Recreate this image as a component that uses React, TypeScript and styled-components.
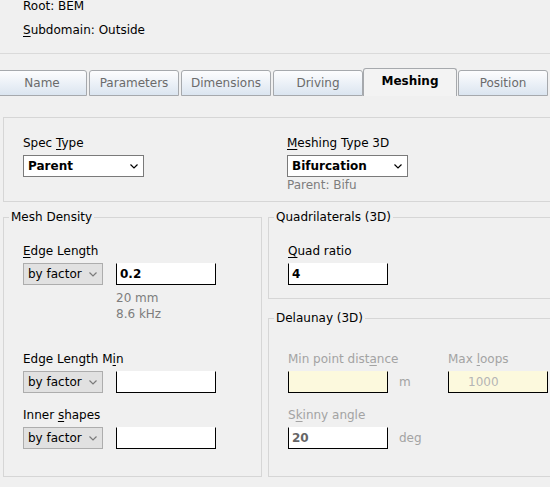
import React from "react";
import styled, { createGlobalStyle } from "styled-components";

const GlobalStyle = createGlobalStyle`
  html, body {
    margin: 0;
    background: #f0f0f0;
  }
  body {
    font-family: "DejaVu Sans", Verdana, sans-serif;
    font-size: 12px;
    color: #000;
    overflow: hidden;
  }
`;

const Chevron = ({ color }: { color: string }) => (
  <svg width="8" height="5" viewBox="0 0 8 5">
    <polyline points="0.5,0.5 4,4 7.5,0.5" fill="none" stroke={color} strokeWidth="1.2" />
  </svg>
);

export default function App() {
  return (
    <Page>
      <GlobalStyle />
      <Header>
        <InfoRow>Root: BEM</InfoRow>
        <InfoRow>
          <Mn>S</Mn>ubdomain: Outside
        </InfoRow>
      </Header>

      <TabStrip>
        <Tab>Name</Tab>
        <Tab>Parameters</Tab>
        <Tab>Dimensions</Tab>
        <Tab>Driving</Tab>
        <Tab $active>Meshing</Tab>
        <Tab>Position</Tab>
        <Tab />
      </TabStrip>

      <SpecBox>
        <Field>
          <Label>
            Spec <Mn>T</Mn>ype
          </Label>
          <Controls>
            <Select $width={121}>
              Parent
              <Chevron color="#000" />
            </Select>
          </Controls>
        </Field>
        <Field>
          <Label>
            <Mn>M</Mn>eshing Type 3D
          </Label>
          <Controls>
            <Select $width={121}>
              Bifurcation
              <Chevron color="#000" />
            </Select>
          </Controls>
          <Hint>Parent: Bifu</Hint>
        </Field>
      </SpecBox>

      <Bottom>
        <Group>
          <Legend>Mesh Density</Legend>
          <GroupBody $top={16}>
            <Field>
              <Label>
                <Mn>E</Mn>dge Length
              </Label>
              <Controls>
                <Select $width={80} $flat>
                  by factor
                  <Chevron color="#7a7a7a" />
                </Select>
                <TextBox>0.2</TextBox>
              </Controls>
              <Notes>
                <div>20 mm</div>
                <div>8.6 kHz</div>
              </Notes>
            </Field>
            <Field>
              <Label>
                Edge Length M<Mn>i</Mn>n
              </Label>
              <Controls>
                <Select $width={80} $flat>
                  by factor
                  <Chevron color="#7a7a7a" />
                </Select>
                <TextBox />
              </Controls>
            </Field>
            <Field>
              <Label>
                Inner <Mn>s</Mn>hapes
              </Label>
              <Controls>
                <Select $width={80} $flat>
                  by factor
                  <Chevron color="#7a7a7a" />
                </Select>
                <TextBox />
              </Controls>
            </Field>
          </GroupBody>
        </Group>

        <RightColumn>
          <Group $bottom={13}>
            <Legend>Quadrilaterals (3D)</Legend>
            <GroupBody $top={16}>
              <Field>
                <Label>
                  <Mn>Q</Mn>uad ratio
                </Label>
                <Controls>
                  <TextBox>4</TextBox>
                </Controls>
              </Field>
            </GroupBody>
          </Group>

          <Group $grow>
            <Legend>Delaunay (3D)</Legend>
            <GroupBody $top={23}>
              <PairRow>
                <Field>
                  <Label $disabled>
                    Min point dist<Mn>a</Mn>nce
                  </Label>
                  <Controls>
                    <TextBox $tone="locked" />
                    <Unit>m</Unit>
                  </Controls>
                </Field>
                <Field>
                  <Label $disabled>
                    Max <Mn>l</Mn>oops
                  </Label>
                  <Controls>
                    <TextBox $tone="locked" $light>
                      1000
                    </TextBox>
                  </Controls>
                </Field>
              </PairRow>
              <Field>
                <Label $disabled>
                  S<Mn>k</Mn>inny angle
                </Label>
                <Controls>
                  <TextBox $tone="dim">20</TextBox>
                  <Unit>deg</Unit>
                </Controls>
              </Field>
            </GroupBody>
          </Group>
        </RightColumn>
      </Bottom>
    </Page>
  );
}

const Page = styled.div`
  width: 558px;
  height: 487px;
  overflow: hidden;
`;

const Header = styled.div`
  margin-top: -6px;
  padding: 0 0 11px 23px;
  border-bottom: 1px solid #dadada;
`;

const InfoRow = styled.div`
  height: 24px;
  line-height: 24px;
`;

const Mn = styled.u`
  text-decoration: underline;
  text-underline-offset: 2px;
`;

const TabStrip = styled.div`
  display: flex;
  align-items: flex-end;
  height: 28px;
  margin: 14px 0 0 -3px;
`;

const Tab = styled.div<{ $active?: boolean }>`
  flex: none;
  box-sizing: border-box;
  width: ${(p) => (p.$active ? 94 : 90)}px;
  height: ${(p) => (p.$active ? 28 : 26)}px;
  margin-left: ${(p) => (p.$active ? -2 : 0)}px;
  margin-right: ${(p) => (p.$active ? 1 : 2)}px;
  border: 1px solid #a6a9ad;
  border-bottom: ${(p) => (p.$active ? "none" : "1px solid #a6a9ad")};
  border-radius: 3px 3px 0 0;
  background: ${(p) => (p.$active ? "#f3f3f3" : "linear-gradient(#fdfdfe, #dbe5f0)")};
  color: ${(p) => (p.$active ? "#000" : "#6b6b6b")};
  font-weight: ${(p) => (p.$active ? "bold" : "normal")};
  display: flex;
  align-items: center;
  justify-content: center;
  padding-bottom: ${(p) => (p.$active ? 3 : 0)}px;
`;

const SpecBox = styled.div`
  margin: 21px 0 0 3px;
  padding: 16px 0 8px 19px;
  border: 1px solid #d6d6d6;
  display: grid;
  grid-template-columns: 264px 1fr;
`;

const Field = styled.div`
  display: flex;
  flex-direction: column;
  align-items: flex-start;
`;

const Label = styled.div<{ $disabled?: boolean }>`
  padding-top: 1px;
  line-height: 16px;
  color: ${(p) => (p.$disabled ? "#a3a3a3" : "#000")};
`;

const Controls = styled.div`
  margin-top: 4px;
  display: flex;
  align-items: center;
  gap: 13px;
`;

const Select = styled.div<{ $width: number; $flat?: boolean }>`
  box-sizing: border-box;
  width: ${(p) => p.$width}px;
  height: 22px;
  padding: 0 5px 0 4px;
  display: flex;
  align-items: center;
  justify-content: space-between;
  border: 1px solid ${(p) => (p.$flat ? "#adadad" : "#7a7a7a")};
  background: ${(p) => (p.$flat ? "#e1e1e1" : "#fff")};
  font-weight: ${(p) => (p.$flat ? "normal" : "bold")};
`;

const Hint = styled.div`
  line-height: 16px;
  color: #7d7d7d;
`;

const TextBox = styled.div<{ $tone?: "normal" | "locked" | "dim"; $light?: boolean }>`
  box-sizing: border-box;
  width: 100px;
  height: 22px;
  line-height: 20px;
  padding-left: ${(p) => (p.$light ? 19 : 3)}px;
  border: 1px solid #000;
  border-top-color: transparent;
  background: ${(p) => (p.$tone === "locked" ? "#fcf9dd" : "#fff")};
  font-weight: ${(p) => (p.$light ? "normal" : "bold")};
  color: ${(p) => (p.$light ? "#b5b5b5" : p.$tone === "dim" ? "#666" : "#000")};
`;

const Notes = styled.div`
  margin: 5px 0 15px 93px;
  line-height: 16px;
  color: #7d7d7d;
`;

const Unit = styled.span`
  color: #a3a3a3;
  margin-left: -2px;
`;

const Bottom = styled.div`
  margin: 7px 0 0 3px;
  display: grid;
  grid-template-columns: 259px 1fr;
  column-gap: 6px;
`;

const RightColumn = styled.div`
  display: flex;
  flex-direction: column;
  gap: 11px;
`;

const Group = styled.fieldset<{ $bottom?: number; $grow?: boolean }>`
  margin: 0;
  min-width: 0;
  padding: 0 0 ${(p) => p.$bottom ?? 27}px 5px;
  border: 1px solid #d6d6d6;
  flex: ${(p) => (p.$grow ? 1 : "none")};
`;

const Legend = styled.legend`
  padding: 0 2px;
  line-height: 17px;
`;

const GroupBody = styled.div<{ $top: number }>`
  padding: ${(p) => p.$top}px 0 0 14px;
  display: flex;
  flex-direction: column;
  gap: 13px;
`;

const PairRow = styled.div`
  display: grid;
  grid-template-columns: 160px auto;
`;
